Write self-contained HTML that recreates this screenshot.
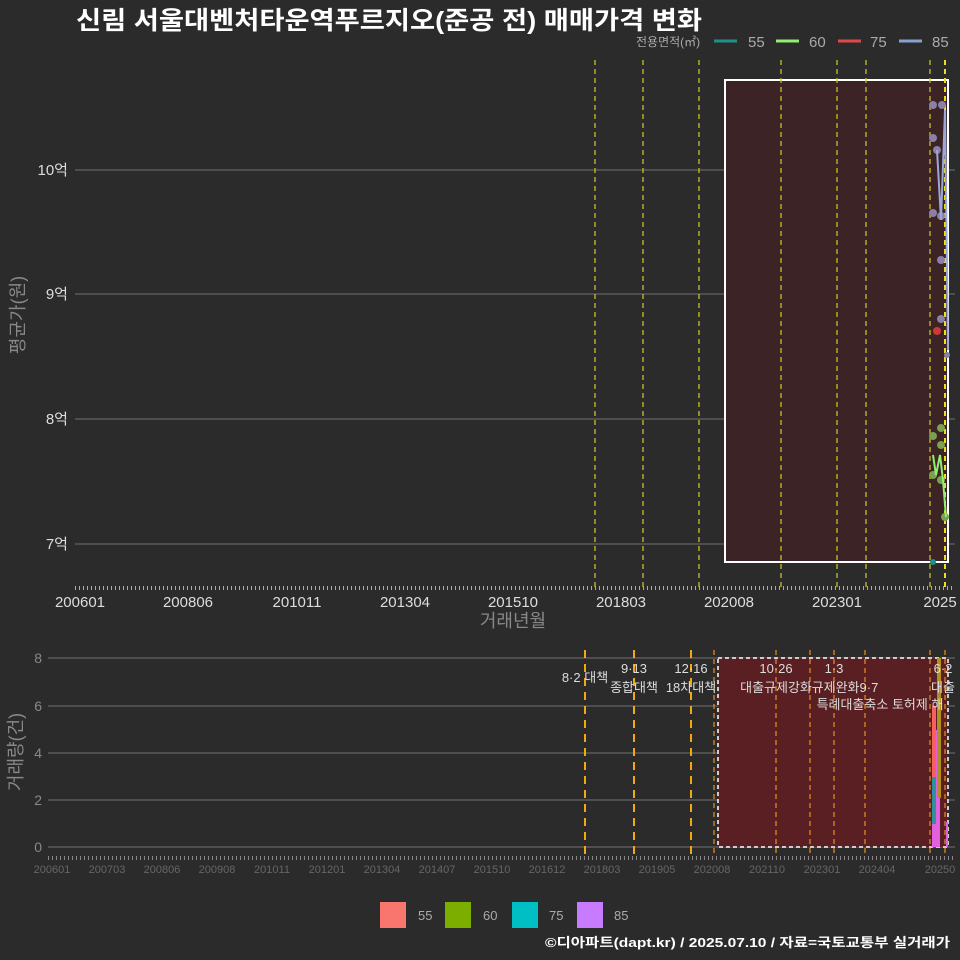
<!DOCTYPE html>
<html><head><meta charset="utf-8"><style>
body{margin:0;background:#2b2b2b}
svg{display:block}
text{font-family:"Liberation Sans","Noto Sans CJK KR",sans-serif}
</style></head><body>
<svg width="960" height="960" viewBox="0 0 960 960">
<rect width="960" height="960" fill="#2b2b2b"/>
<text x="76" y="29" font-size="25" font-weight="bold" fill="#fff" textLength="626" lengthAdjust="spacingAndGlyphs">신림 서울대벤처타운역푸르지오(준공 전) 매매가격 변화</text>
<g font-size="13" fill="#aaa">
<text x="636" y="46" font-size="12">전용면적(㎡)</text>
<line x1="714" y1="41" x2="737" y2="41" stroke="#1f8f88" stroke-width="3"/><text x="748" y="47" font-size="15">55</text>
<line x1="776" y1="41" x2="799" y2="41" stroke="#90ee70" stroke-width="3"/><text x="809" y="47" font-size="15">60</text>
<line x1="838" y1="41" x2="861" y2="41" stroke="#e04848" stroke-width="3"/><text x="870" y="47" font-size="15">75</text>
<line x1="899" y1="41" x2="922" y2="41" stroke="#8aa0d0" stroke-width="3"/><text x="932" y="47" font-size="15">85</text>
</g>
<g stroke="#5a5a5a" stroke-width="1.5">
<line x1="75" y1="170" x2="955" y2="170"/><line x1="75" y1="294" x2="955" y2="294"/>
<line x1="75" y1="419" x2="955" y2="419"/><line x1="75" y1="544" x2="955" y2="544"/>
</g>
<g font-size="15" fill="#ddd" text-anchor="end">
<text x="68" y="175">10억</text><text x="68" y="299">9억</text><text x="68" y="424">8억</text><text x="68" y="549">7억</text>
</g>
<text transform="translate(24,315) rotate(-90)" font-size="18" fill="#888" text-anchor="middle">평균가(원)</text>
<rect x="725" y="80" width="223" height="482" fill="#3c2326" stroke="#fff" stroke-width="2"/>
<g stroke="#c8c020" stroke-width="1.3" stroke-dasharray="5,4">
<line x1="595" y1="60" x2="595" y2="588"/><line x1="643" y1="60" x2="643" y2="588"/><line x1="699" y1="60" x2="699" y2="588"/>
<line x1="781" y1="60" x2="781" y2="588"/><line x1="837" y1="60" x2="837" y2="588"/><line x1="866" y1="60" x2="866" y2="588"/>
<line x1="930" y1="60" x2="930" y2="588"/><line x1="945" y1="60" x2="945" y2="588" stroke="#e8e020" stroke-width="2"/>
</g>
<g fill="#8a80a8">
<circle cx="933" cy="105" r="4"/><circle cx="942" cy="105" r="4"/><circle cx="933" cy="138" r="4"/><circle cx="937" cy="150" r="4"/>
<circle cx="933" cy="213" r="4"/><circle cx="941" cy="216" r="4"/><circle cx="941" cy="260" r="4"/><circle cx="941" cy="319" r="4"/><circle cx="947" cy="355" r="3"/>
</g>
<polyline points="937,150 941,220 945,110 948,350" fill="none" stroke="#9aa8d8" stroke-width="2"/>
<circle cx="937" cy="331" r="4" fill="#d03838"/>
<g fill="#7aa050"><circle cx="933" cy="436" r="4"/><circle cx="941" cy="428" r="4"/><circle cx="941" cy="445" r="4"/><circle cx="933" cy="475" r="4"/><circle cx="941" cy="480" r="4"/><circle cx="945" cy="517" r="4"/></g>
<polyline points="933,455 936,475 940,455 943,480 946,517" fill="none" stroke="#90ee70" stroke-width="2"/>
<circle cx="933" cy="562" r="3" fill="#1f8f88"/>
<line x1="75" y1="588" x2="955" y2="588" stroke="#aaa" stroke-width="4" stroke-dasharray="1,3"/>
<g font-size="15" fill="#ddd" text-anchor="middle">
<text x="80" y="607">200601</text><text x="188" y="607">200806</text><text x="297" y="607">201011</text><text x="405" y="607">201304</text>
<text x="513" y="607">201510</text><text x="621" y="607">201803</text><text x="729" y="607">202008</text><text x="837" y="607">202301</text><text x="940" y="607">2025</text>
</g>
<text x="513" y="627" font-size="18" fill="#888" text-anchor="middle">거래년월</text>
<g stroke="#5a5a5a" stroke-width="1.5">
<line x1="48" y1="658" x2="955" y2="658"/><line x1="48" y1="706" x2="955" y2="706"/><line x1="48" y1="753" x2="955" y2="753"/>
<line x1="48" y1="800" x2="955" y2="800"/><line x1="48" y1="847" x2="955" y2="847"/>
</g>
<g font-size="14" fill="#888" text-anchor="end">
<text x="42" y="663">8</text><text x="42" y="711">6</text><text x="42" y="758">4</text><text x="42" y="805">2</text><text x="42" y="852">0</text>
</g>
<text transform="translate(22,752) rotate(-90)" font-size="18" fill="#888" text-anchor="middle">거래량(건)</text>
<rect x="718" y="658" width="230" height="189" fill="#5a1f22" stroke="#ccc" stroke-width="2" stroke-dasharray="4,3"/>
<g stroke="#f0a818" stroke-width="2" stroke-dasharray="8,6">
<line x1="585" y1="650" x2="585" y2="855"/><line x1="634" y1="650" x2="634" y2="855"/><line x1="691" y1="650" x2="691" y2="855"/>
</g>
<g stroke="#e89020" stroke-width="1.2" stroke-dasharray="5,4">
<line x1="714" y1="650" x2="714" y2="855"/><line x1="776" y1="650" x2="776" y2="855"/><line x1="810" y1="650" x2="810" y2="855"/>
<line x1="834" y1="650" x2="834" y2="855"/><line x1="865" y1="650" x2="865" y2="855"/><line x1="930" y1="650" x2="930" y2="855"/><line x1="945" y1="650" x2="945" y2="855"/>
</g>
<rect x="932" y="706" width="4" height="141" fill="#f86060"/>
<rect x="936" y="730" width="4" height="117" fill="#e060e0"/>
<rect x="937" y="658" width="4" height="140" fill="#b09020"/>
<rect x="932" y="777" width="4" height="47" fill="#3090a0"/>
<rect x="932" y="824" width="8" height="23" fill="#e060e0"/>
<rect x="946" y="822" width="2" height="25" fill="#e060e0"/>
<g font-size="13" fill="#ddd" text-anchor="middle">
<text x="585" y="682">8·2 대책</text>
<text x="634" y="673">9·13</text><text x="634" y="692">종합대책</text>
<text x="691" y="673">12·16</text><text x="691" y="692">18차대책</text>
<text x="776" y="673">10·26</text><text x="776" y="692">대출규제강화</text>
<text x="834" y="673">1·3</text><text x="845" y="692">규제완화9·7</text>
<text x="880" y="709">특례대출축소 토허제 해</text>
<text x="943" y="673">6·2</text><text x="943" y="692">대출</text>
</g>
<line x1="48" y1="858" x2="955" y2="858" stroke="#888" stroke-width="4" stroke-dasharray="1,3"/>
<g font-size="11" fill="#666" text-anchor="middle">
<text x="52" y="873">200601</text><text x="107" y="873">200703</text><text x="162" y="873">200806</text><text x="217" y="873">200908</text>
<text x="272" y="873">201011</text><text x="327" y="873">201201</text><text x="382" y="873">201304</text><text x="437" y="873">201407</text>
<text x="492" y="873">201510</text><text x="547" y="873">201612</text><text x="602" y="873">201803</text><text x="657" y="873">201905</text>
<text x="712" y="873">202008</text><text x="767" y="873">202110</text><text x="822" y="873">202301</text><text x="877" y="873">202404</text><text x="940" y="873">20250</text>
</g>
<g font-size="13" fill="#aaa">
<rect x="380" y="902" width="26" height="26" fill="#f8766d"/><text x="418" y="920">55</text>
<rect x="445" y="902" width="26" height="26" fill="#7cae00"/><text x="483" y="920">60</text>
<rect x="512" y="902" width="26" height="26" fill="#00bfc4"/><text x="549" y="920">75</text>
<rect x="577" y="902" width="26" height="26" fill="#c77cff"/><text x="614" y="920">85</text>
</g>
<text x="950" y="947" font-size="13" font-weight="bold" fill="#fff" text-anchor="end" textLength="405" lengthAdjust="spacingAndGlyphs">©디아파트(dapt.kr) / 2025.07.10 / 자료=국토교통부 실거래가</text>
</svg>
</body></html>
